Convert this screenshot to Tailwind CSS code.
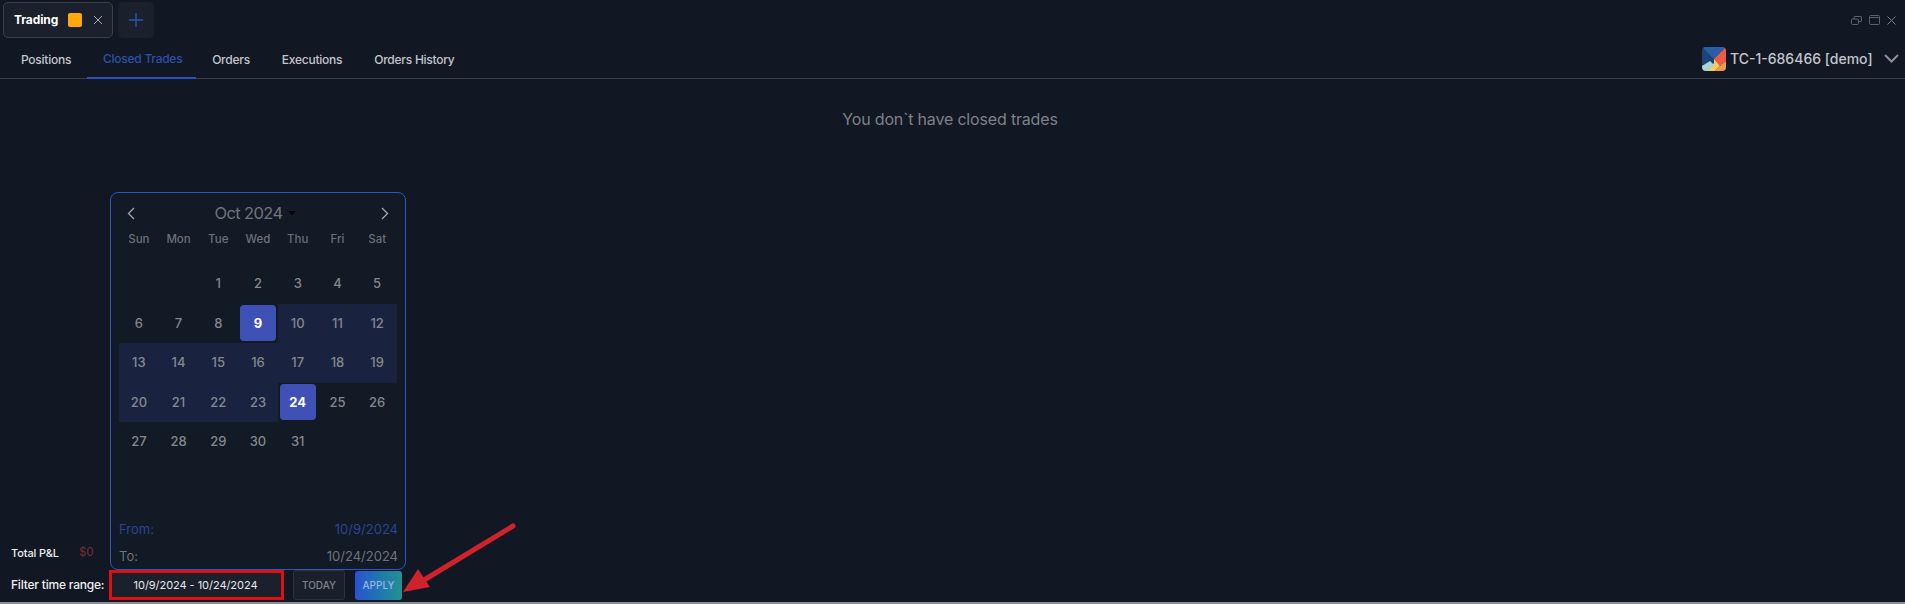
<!doctype html>
<html lang="en">
<head>
    <meta charset="utf-8">
    <meta name="viewport" content="width=device-width,initial-scale=1">
    <script src="https://cdn.jsdelivr.net/npm/@tailwindcss/browser@4"></script>
    <title>Closed Trades</title>
</head>
<body class="bg-[#111723] h-screen overflow-hidden flex flex-col font-['Inter',sans-serif] text-[#c3c6cc]">

<!-- tabs -->
<div class="flex items-start h-[40px] pt-[2px] pl-[3px] shrink-0">
    <div class="flex items-center w-[110px] h-[36px] pl-[10px] gap-[7px] bg-[#1b212c] border border-[#3a404b] rounded-[5px]">
        <span class="text-[12px] font-bold text-white w-[47px] tracking-[-0.1px]">Trading</span>
        <span class="w-[14px] h-[14px] rounded-[2px] bg-[#ffa90b]"></span>
        <svg class="w-[10px] h-[10px] ml-[4px]" viewBox="0 0 10 10" fill="none" stroke="#a5a8ae" stroke-width="1"><path d="M1 1l8 8M9 1l-8 8"/></svg>
    </div>
    <div class="flex items-center justify-center w-[36px] h-[36px] ml-[5px] bg-[#1b212c] rounded-[5px]">
        <svg class="w-[14px] h-[14px]" viewBox="0 0 14 14" fill="none" stroke="#2d53b8" stroke-width="1.4"><path d="M7 0v14M0 7h14"/></svg>
    </div>
    <div class="ml-auto flex items-center gap-[7px] pr-[9px] pt-[13px]">
        <svg class="w-[11px] h-[9px]" viewBox="0 0 11 9" fill="none" stroke="#5b606a"><rect x=".5" y="3" width="7" height="5.5" rx="1"/><path d="M3 3V1a.5.5 0 0 1 .5-.5h6.500a.5.5 0 0 1 .5.500v4a.5.5 0 0 1-.5.500H8"/></svg>
        <svg class="w-[11px] h-[10px]" viewBox="0 0 11 10" fill="none" stroke="#5b606a"><rect x=".5" y=".5" width="10" height="9" rx="1"/><path d="M.5 2.500h10"/></svg>
        <svg class="w-[9px] h-[9px]" viewBox="0 0 9 9" fill="none" stroke="#7b7f87"><path d="M.5.500l8 8M8.500.500l-8 8"/></svg>
    </div>
</div>

<!-- nav -->
<div class="flex items-stretch h-[39px] shrink-0 border-b border-[#3a3f4a] text-[12px] font-medium tracking-[-0.25px] text-[#c3c6cc]">
    <a class="flex items-center pl-[21px] pr-[16px] h-[39px]">Positions</a>
    <a class="flex items-center justify-center w-[109px] h-[39px] pl-[2px] text-[#2f4fa8] border-b-2 border-[#2c50c0]">Closed Trades</a>
    <a class="flex items-center pl-[16px] pr-[16px] h-[39px]">Orders</a>
    <a class="flex items-center pl-[16px] pr-[16px] h-[39px]">Executions</a>
    <a class="flex items-center pl-[16px] h-[39px]">Orders History</a>
    <div class="ml-auto flex items-center pr-[6px] pb-[1px] tracking-normal">
        <svg class="w-[24px] h-[24px] mr-[4px]" viewBox="0 0 24 24">
            <clipPath id="logoClip"><rect width="24" height="24" rx="4"/></clipPath>
            <g clip-path="url(#logoClip)">
                <rect width="24" height="24" fill="#1d4479"/>
                <path d="M0 0h24L12 12z" fill="#2a5ea8"/>
                <path d="M24 0L12 12l6 7 6-5z" fill="#ec5a48"/>
                <path d="M12 12l6 7-5 5H6l-1-1 7-7z" fill="#fbcb5c"/>
                <path d="M18 19l6-5v10H13z" fill="#f39a45"/>
                <path d="M0 24v-5l8-5 4 4-6 6z" fill="#a8d6d0"/>
            </g>
        </svg>
        <span class="text-[14px] text-[#c3c6cc] w-[141px] whitespace-nowrap">TC-1-686466 [demo]</span>
        <svg class="w-[15px] h-[9px] ml-[13px]" viewBox="0 0 15 9" fill="none" stroke="#8b8f97" stroke-width="2"><path d="M1 1l6.500 6.500L14 1"/></svg>
    </div>
</div>

<!-- content -->
<div class="flex-1 relative">
    <p class="text-center text-[16px] text-[#7d818a] pt-[30px] leading-[20px] tracking-[-0.17px] pr-[5px]">You don`t have closed trades</p>

    <!-- calendar popover -->
    <div class="absolute left-[110px] top-[113px] w-[296px] h-[378px] bg-[#111a25] border border-[#2f55c0] rounded-[8px] pt-[8px] px-[8px] z-10">
        <div class="flex items-center h-[24px] justify-between pl-[8px] pr-[8px]">
            <svg class="w-[8px] h-[13px]" viewBox="0 0 8 13" fill="none" stroke="#a5a8ae" stroke-width="1.300"><path d="M7 1L1.500 6.500 7 12"/></svg>
            <div class="flex items-center mr-[6px]">
                <span class="text-[16.500px] tracking-[-0.6px] text-[#70747c]">Oct 2024</span>
                <span class="ml-[5px] w-0 h-0 border-x-[4px] border-x-transparent border-t-[4px] border-t-black"></span>
            </div>
            <svg class="w-[8px] h-[13px]" viewBox="0 0 8 13" fill="none" stroke="#a5a8ae" stroke-width="1.300"><path d="M1 1l5.500 5.500L1 12"/></svg>
        </div>
        <div class="grid grid-cols-7 w-[278px] h-[34px] items-center text-center text-[11.500px] font-medium text-[#6c7079] border-b border-[#141c28] pb-[4px] mb-[5px]">
            <span>Sun</span><span>Mon</span><span>Tue</span><span>Wed</span><span>Thu</span><span>Fri</span><span>Sat</span>
        </div>
        <div class="grid grid-cols-7 w-[278px] auto-rows-[39.500px] text-center text-[13px] font-medium text-[#84878f]">
            <span></span><span></span>
            <span class="leading-[39.500px]">1</span><span class="leading-[39.500px]">2</span><span class="leading-[39.500px]">3</span><span class="leading-[39.500px]">4</span><span class="leading-[39.500px]">5</span>

            <span class="leading-[39.500px]">6</span><span class="leading-[39.500px]">7</span><span class="leading-[39.500px]">8</span>
            <span class="flex items-center justify-center"><span class="w-[36px] h-[36px] leading-[36px] rounded-[4px] bg-[#3f51b5] text-white font-bold">9</span></span>
            <span class="leading-[39.500px] bg-[#19233f]">10</span><span class="leading-[39.500px] bg-[#19233f]">11</span><span class="leading-[39.500px] bg-[#19233f]">12</span>

            <span class="leading-[39.500px] bg-[#19233f]">13</span><span class="leading-[39.500px] bg-[#19233f]">14</span><span class="leading-[39.500px] bg-[#19233f]">15</span><span class="leading-[39.500px] bg-[#19233f]">16</span><span class="leading-[39.500px] bg-[#19233f]">17</span><span class="leading-[39.500px] bg-[#19233f]">18</span><span class="leading-[39.500px] bg-[#19233f]">19</span>

            <span class="leading-[39.500px] bg-[#19233f]">20</span><span class="leading-[39.500px] bg-[#19233f]">21</span><span class="leading-[39.500px] bg-[#19233f]">22</span><span class="leading-[39.500px] bg-[#19233f]">23</span>
            <span class="flex items-center justify-center"><span class="w-[36px] h-[36px] leading-[36px] rounded-[4px] bg-[#3f51b5] text-white font-bold">24</span></span>
            <span class="leading-[39.500px]">25</span><span class="leading-[39.500px]">26</span>

            <span class="leading-[39.500px]">27</span><span class="leading-[39.500px]">28</span><span class="leading-[39.500px]">29</span><span class="leading-[39.500px]">30</span><span class="leading-[39.500px]">31</span>
        </div>
        <div class="absolute left-[8px] right-[7px] bottom-0 text-[13px]">
            <div class="flex justify-between items-center h-[27px] pt-[2px] border-t border-[#141c28] text-[#2f4391]"><span>From:</span><span>10/9/2024</span></div>
            <div class="flex justify-between items-center h-[27px] pt-[2px] border-t border-[#141c28] text-[#6f737b]"><span>To:</span><span>10/24/2024</span></div>
        </div>
    </div>

    <!-- annotation arrow -->
    <svg class="absolute left-[400px] top-[440px] w-[120px] h-[84px] z-20" viewBox="0 0 120 84">
        <path d="M113 7L24 61" stroke="#d0222a" stroke-width="5" stroke-linecap="round"/>
        <path d="M3 73L18 50 30 68z" fill="#d0222a"/>
    </svg>

    <div class="absolute left-[11px] top-[466px] flex items-center h-[16px] text-[11px] font-medium tracking-[-0.1px] text-[#eceef1]">
        <span class="w-[68px]">Total P&amp;L</span>
        <span class="text-[#7c2a34] font-normal text-[11.500px]">$0</span>
    </div>
</div>

<!-- filter bar -->
<div class="flex items-center h-[34px] pl-[11px] shrink-0 text-white">
    <span class="w-[98px] text-[12px] font-medium tracking-[-0.2px] text-[#eceef1] whitespace-nowrap">Filter time range:</span>
    <div class="flex items-center justify-center w-[175px] h-[30px] pr-[2px] bg-[#1b212c] border-[3px] border-[#e01010] text-[11px] tracking-[-0.05px] text-[#e6e8ec]">10/9/2024 - 10/24/2024</div>
    <button class="w-[52px] h-[30px] ml-[9px] bg-[#1a202b] border border-[#2c323d] rounded-[3px] text-[10px] font-medium text-[#7d818a]">TODAY</button>
    <button class="w-[47px] h-[29px] ml-[10px] rounded-[3px] bg-gradient-to-r from-[#2b50d0] to-[#26908f] text-[10px] font-medium text-[#9db3e6]">APPLY</button>
</div>
<div class="h-[2px] bg-[#8a8d92] shrink-0"></div>

</body>
</html>
